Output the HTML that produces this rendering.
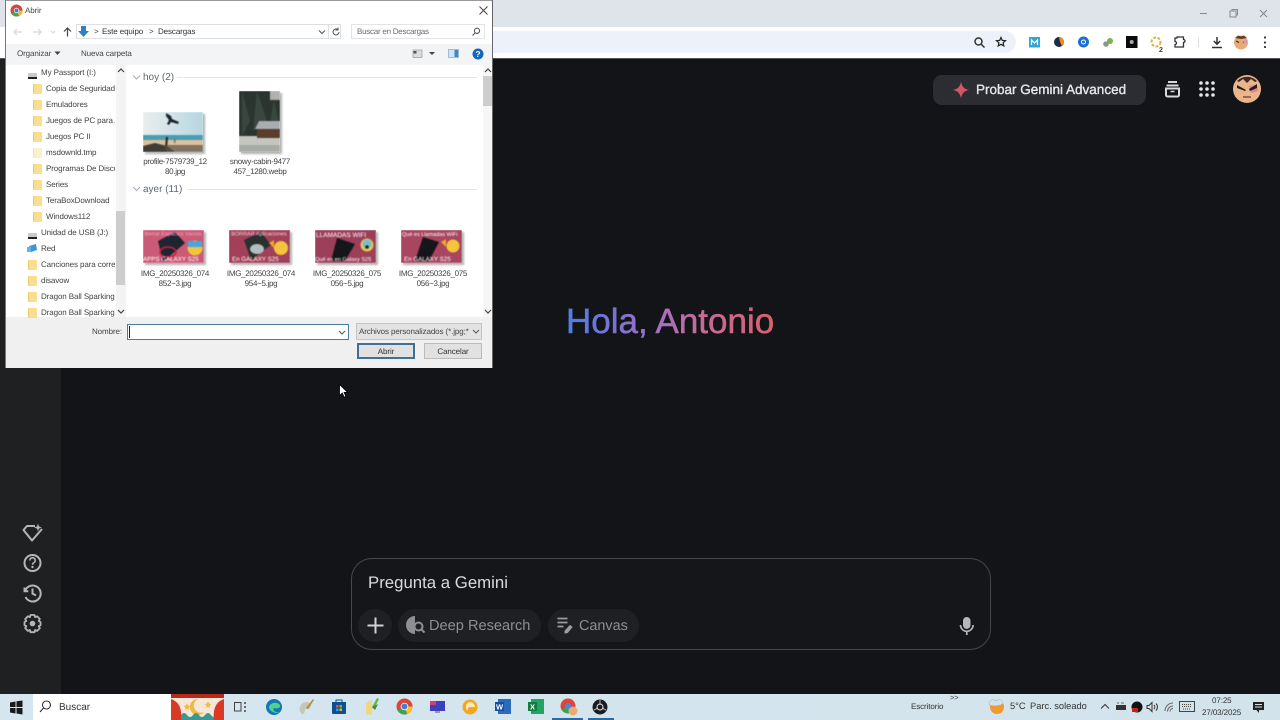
<!DOCTYPE html>
<html lang="es"><head><meta charset="utf-8"><title>Abrir</title>
<style>
html,body{margin:0;padding:0;width:1280px;height:720px;overflow:hidden;background:#131417;font-family:"Liberation Sans",sans-serif}
#w{position:absolute;left:0;top:0;width:1280px;height:720px;overflow:hidden;filter:blur(.3px);text-rendering:geometricPrecision}
.a{position:absolute}
.t{position:absolute;white-space:nowrap;font-size:8px;letter-spacing:-.1px;color:#444;line-height:11px}
.n{letter-spacing:0}
.f{position:absolute;width:8px;height:10px;background:#f8de8d;border-left:1px solid #e9cc70;border-radius:1px}
.cap{position:absolute;width:76px;text-align:center;font-size:8px;letter-spacing:-.3px;line-height:10px;color:#444;text-rendering:geometricPrecision}
.th{position:absolute;box-shadow:2px 2px 2px rgba(0,0,0,.3);overflow:hidden}
.th svg{filter:blur(.45px)}
svg{position:absolute;overflow:visible}
</style></head><body><div id="w">

<!-- Chrome behind -->
<div class="a" style="left:0;top:0;width:1280px;height:27px;background:#dfe3ea"></div>
<div class="a" style="left:0;top:27px;width:1280px;height:31px;background:#fff"></div>
<div class="a" style="left:480px;top:31px;width:536px;height:22px;background:#edf2fa;border-radius:0 11px 11px 0"></div>
<div class="a" style="left:0;top:58px;width:1280px;height:1px;background:#555"></div>
<svg style="left:0;top:0" width="1280" height="59" fill="none" stroke="#555">
<path d="M1200 13.500h7" stroke="#888"/><rect x="1230" y="11" width="6" height="6" stroke="#888"/><path d="M1232 11v-1.500h5.500v5.500h-1.500" stroke="#888"/>
<path d="M1260 10l7 7M1267 10l-7 7" stroke="#888"/>
<circle cx="978.500" cy="41.500" r="3.500" stroke="#333" stroke-width="1.500"/><path d="M981 44l3.500 3.500" stroke="#333" stroke-width="1.500"/>
<path d="M1001 37.500l1.300 2.900 3.200.3-2.400 2.100.7 3.100-2.800-1.600-2.800 1.600.7-3.100-2.400-2.100 3.200-.3z" stroke="#222" stroke-width="1.200"/>
<rect x="1029" y="37" width="11" height="10.500" fill="#34a4d8" stroke="none"/><path d="M1031.500 45v-5l3 3 3-3v5" stroke="#fff" stroke-width="1.200"/>
<circle cx="1059" cy="42" r="5" fill="#1b2a49" stroke="none"/><path d="M1059 37a5 5 0 0 1 3 9l-2-4z" fill="#ef8a1f" stroke="none"/>
<circle cx="1083.500" cy="42" r="5.500" fill="#1a6fd0" stroke="none"/><circle cx="1083.500" cy="42" r="2" stroke="#fff"/>
<circle cx="1106" cy="44" r="2.800" fill="#8a9a88" stroke="none"/><circle cx="1110" cy="41" r="3" fill="#7fae54" stroke="none"/>
<rect x="1126" y="36" width="11.500" height="12" fill="#0b0b0b" stroke="none"/><circle cx="1131.700" cy="42" r="2" fill="#aaa" stroke="none"/>
<circle cx="1156" cy="42" r="4.500" stroke="#e0b43c" stroke-width="2" stroke-dasharray="3 1.500"/>
<path d="M1177 37h6.500v2.500a1.500 1.500 0 0 1 0 3v4.500h-8.500v-2.500a1.500 1.500 0 0 0 0-3v-3.500h2z" stroke="#333" stroke-width="1.300"/>
<path d="M1198.500 38v9" stroke="#ddd"/>
<path d="M1217 37v7M1213.800 41l3.200 3.200 3.200-3.200M1212 47.500h10" stroke="#333" stroke-width="1.500"/>
<circle cx="1265" cy="37.500" r="1.100" fill="#333" stroke="none"/><circle cx="1265" cy="42.500" r="1.100" fill="#333" stroke="none"/><circle cx="1265" cy="47" r="1.100" fill="#333" stroke="none"/>
<circle cx="1241" cy="42.500" r="7" fill="#e8ab78" stroke="none"/><path d="M1235 38l3-2.500 3 1 3-1 3 2.500-6 1z" fill="#5e3c2a" stroke="none"/><path d="M1236 41l3 1.500M1246 41l-3 1.500" stroke="#3a2418"/><path d="M1243 40l4 0 0 3-3 1z" fill="#d99ab0" stroke="none"/>
</svg>
<div class="t" style="left:1159px;top:45px;font-size:7px;font-weight:bold;color:#333">2</div>

<!-- Gemini sidebar -->
<div class="a" style="left:0;top:59px;width:61px;height:635px;background:#1f2022"></div>
<svg style="left:0;top:510px" width="61" height="130" fill="none" stroke="#b4b6b8" stroke-width="2">
<path d="M35 16h-8l-3.500 4 8.500 10.500 10-11.500" stroke-linejoin="round"/><path d="M38 14.500l.8 2.200 2.200.8-2.200.8-.8 2.200-.8-2.200-2.200-.8 2.200-.8z" fill="#b4b6b8" stroke-width=".6"/>
<circle cx="32.500" cy="53" r="8"/><path d="M29.800 50.500a2.700 2.700 0 1 1 4 2.300c-.9.500-1.300 1-1.300 2" stroke-width="1.600"/><circle cx="32.500" cy="57" r=".6" stroke-width="1.200"/>
<path d="M25.300 80.500a8 8 0 1 1 .2 6.500M24.500 77.500v3.800h3.800M32.500 78.500v5l3.500 2"/>
<circle cx="32.500" cy="113.500" r="2.800" fill="#b4b6b8" stroke="none"/><path d="M30.500 105h4l.6 2.200 2-.9 2.700 2.700-1.100 2 1.800 1v3.200l-1.800 1 1.100 2-2.700 2.700-2-.9-.6 2.200h-4l-.6-2.200-2 .9-2.700-2.700 1.100-2-1.800-1V112l1.800-1-1.100-2 2.700-2.700 2 .9z" stroke-width="1.800" stroke-linejoin="round"/>
</svg>

<!-- Gemini header -->
<div class="a" style="left:933px;top:75px;width:213px;height:30px;background:#2c2d32;border-radius:9px"></div>
<svg style="left:952px;top:81px" width="18" height="18"><path d="M9 0.500C9.800 5.500 12 8 17 9 12 10 9.800 12.500 9 17.500 8.200 12.500 6 10 1 9 6 8 8.200 5.500 9 .5z" fill="#d2566a"/></svg>
<div class="t n" style="left:976px;top:82px;font-size:13.500px;line-height:16px;color:#e6e7e9;-webkit-text-stroke:.35px #e6e7e9">Probar Gemini Advanced</div>
<svg style="left:1160px;top:78px" width="30" height="24" fill="none" stroke="#d8d9da" stroke-width="2"><path d="M8 4h9M6.500 7.500h12"/><path d="M6 10.500h13v6.500a1.500 1.500 0 0 1-1.500 1.500h-10a1.500 1.500 0 0 1-1.500-1.500z"/><path d="M10.500 13.500h4" stroke-width="1.500"/></svg>
<svg style="left:1199px;top:81px" width="16" height="16" fill="#e4e5e6"><circle cx="2" cy="2" r="1.800"/><circle cx="8" cy="2" r="1.800"/><circle cx="14" cy="2" r="1.800"/><circle cx="2" cy="8" r="1.800"/><circle cx="8" cy="8" r="1.800"/><circle cx="14" cy="8" r="1.800"/><circle cx="2" cy="14" r="1.800"/><circle cx="8" cy="14" r="1.800"/><circle cx="14" cy="14" r="1.800"/></svg>
<svg style="left:1233px;top:75px" width="28" height="28"><circle cx="14" cy="14" r="14" fill="#e9b58a"/><path d="M4 6a14 14 0 0 1 20 0l-2 1-4-3-4 4-4-4-4 3z" fill="#3e2a22"/><path d="M16 11l8-1 1 6-7 2z" fill="#d884a4"/><path d="M4 10l9 5-1 1-8-3zM24 9l-8 5 1 2 7-3z" fill="#2e1c18"/><path d="M10 22h8" stroke="#8a4a3a" stroke-width="1.500"/></svg>

<!-- Greeting -->
<svg style="left:0;top:0" width="1280" height="720"><defs><linearGradient id="gr" gradientUnits="userSpaceOnUse" x1="566" y1="0" x2="775" y2="0"><stop offset="0" stop-color="#4f7fe6"/><stop offset=".18" stop-color="#6f74d8"/><stop offset=".42" stop-color="#a26fc4"/><stop offset=".65" stop-color="#c76a98"/><stop offset="1" stop-color="#d9606c"/></linearGradient></defs>
<text x="566" y="333" font-family="Liberation Sans" font-size="35" fill="url(#gr)" stroke="url(#gr)" stroke-width=".5">Hola, Antonio</text></svg>

<!-- Prompt box -->
<div class="a" style="left:351px;top:558px;width:638px;height:90px;border:1px solid #45474a;border-radius:21px;background:#151619"></div>
<div class="t n" style="left:368px;top:573px;font-size:16.800px;line-height:20px;color:#d9dadb">Pregunta a Gemini</div>
<div class="a" style="left:358px;top:609px;width:34px;height:33px;border-radius:50%;background:#1f2023"></div>
<svg style="left:366px;top:616px" width="20" height="20" stroke="#d0d1d2" stroke-width="2"><path d="M9.500 1.500v16M1.500 9.500h16"/></svg>
<div class="a" style="left:398px;top:609px;width:143px;height:33px;border-radius:17px;background:#1f2023"></div>
<svg style="left:406px;top:616px" width="22" height="20" fill="none" stroke="#8d8f91" stroke-width="2"><path d="M9 1a8 8 0 1 0 0 16" fill="#8d8f91"/><circle cx="12.500" cy="10.500" r="4" fill="#1f2023"/><path d="M15.500 13.500l3 3"/></svg>
<div class="t n" style="left:429px;top:617px;font-size:14.600px;line-height:18px;color:#8d8f91">Deep Research</div>
<div class="a" style="left:548px;top:609px;width:91px;height:33px;border-radius:17px;background:#1f2023"></div>
<svg style="left:556px;top:616px" width="20" height="20" fill="none" stroke="#9a9c9e" stroke-width="1.700"><path d="M1.500 2.500h10M1.500 6.500h10M1.500 10.500h6"/><path d="M9 15l5-5.500 2 1.500-4.500 5.500-2.500.5z" fill="#9a9c9e" stroke-width="1"/></svg>
<div class="t n" style="left:579px;top:617px;font-size:14.400px;line-height:18px;color:#8d8f91">Canvas</div>
<svg style="left:957px;top:615px" width="20" height="22" fill="none"><rect x="6" y="2" width="7.500" height="12" rx="3.700" fill="#b5b7b9"/><path d="M3.500 10a6.300 6.300 0 0 0 12.600 0M9.800 16.500v3.500" stroke="#b5b7b9" stroke-width="1.700"/></svg>

<!-- Dialog -->
<div class="a" style="left:5px;top:0;width:488px;height:368px;background:#fff;border-left:1px solid #777;border-right:1px solid #666;box-sizing:border-box"></div>
<div class="a" style="left:6px;top:0;width:486px;height:1px;background:#999"></div>
<div class="a" style="left:6px;top:44px;width:486px;height:21px;background:#f3f4f6"></div>
<div class="a" style="left:6px;top:317px;width:486px;height:51px;background:#f0f0f0"></div>

<svg style="left:10px;top:4px" width="13" height="13"><circle cx="6.500" cy="6.500" r="6" fill="#d9433a"/><path d="M6.500 6.500L1.300 9.500A6 6 0 0 0 9 12z" fill="#3aa757"/><path d="M6.500 6.500L9 12A6 6 0 0 0 12.500 6.500z" fill="#f2bc27"/><circle cx="6.500" cy="6.500" r="2.700" fill="#fff"/><circle cx="6.500" cy="6.500" r="2" fill="#3f7fdc"/></svg>
<div class="t" style="left:25px;top:5px">Abrir</div>
<svg style="left:478px;top:5px" width="11" height="11" stroke="#444" stroke-width="1"><path d="M1.500 1.500l8 8M9.500 1.500l-8 8"/></svg>

<!-- nav -->
<svg style="left:12px;top:26px" width="66" height="12" fill="none" stroke="#d8d8d8" stroke-width="1.200"><path d="M2 6h8M5 3L2 6l3 3M21 6h8M26 3l3 3-3 3"/><path d="M39 5l2 2 2-2" stroke-width="1"/><path d="M55.500 10.500V2.500M52 5.500l3.500-3.500 3.500 3.500" stroke="#444" stroke-width="1.200"/></svg>
<div class="a" style="left:76px;top:24px;width:265px;height:15px;border:1px solid #dcdfe3;box-sizing:border-box;background:#fff"></div>
<div class="a" style="left:328px;top:25px;width:1px;height:13px;background:#dcdfe3"></div>
<svg style="left:77px;top:25px" width="13" height="13"><path d="M4 1h5v5h3L6.500 12 1 6h3z" fill="#2f80c8"/></svg>
<div class="t" style="left:94px;top:26px;font-size:8px">&gt;</div>
<div class="t" style="left:102px;top:26px;color:#333">Este equipo</div>
<div class="t" style="left:149px;top:26px;font-size:8px">&gt;</div>
<div class="t" style="left:158px;top:26px;color:#333">Descargas</div>
<svg style="left:318px;top:29px" width="20" height="8" fill="none" stroke="#555"><path d="M1 1.500l3 3 3-3"/></svg>
<svg style="left:331px;top:27px" width="10" height="10" fill="none" stroke="#555" stroke-width="1"><path d="M8 5a3 3 0 1 1-1-2.300M7 .5v2.500h-2.500"/></svg>
<div class="a" style="left:351px;top:24px;width:134px;height:15px;border:1px solid #e2e4e7;box-sizing:border-box;background:#fff"></div>
<div class="t" style="left:357px;top:26px;color:#6b6b6b;letter-spacing:-.25px">Buscar en Descargas</div>
<svg style="left:471px;top:27px" width="10" height="10" fill="none" stroke="#555" stroke-width="1.100"><circle cx="6" cy="3.800" r="2.600"/><path d="M4 6L1.500 8.500"/></svg>

<!-- toolbar -->
<div class="t" style="left:17px;top:48px">Organizar</div>
<svg style="left:54px;top:51px" width="7" height="5"><path d="M.5 .5h6L3.500 4z" fill="#444"/></svg>
<div class="t" style="left:81px;top:48px">Nueva carpeta</div>
<svg style="left:412px;top:49px" width="30" height="10"><rect x="1" y="1" width="9" height="7.500" fill="#d9dde0" stroke="#8b9094" stroke-width=".6"/><rect x="1.500" y="2" width="3" height="2.500" fill="#555"/><path d="M17 3h6l-3 3z" fill="#444"/></svg>
<svg style="left:448px;top:49px" width="12" height="10"><rect x=".5" y=".5" width="10" height="8" fill="#cfe4f4" stroke="#8aa6ba" stroke-width=".7"/><rect x="6.500" y="1" width="3.500" height="7" fill="#3f88c5"/></svg>
<svg style="left:472px;top:48px" width="12" height="12"><circle cx="6" cy="6" r="5.500" fill="#1368bd"/><text x="6" y="9" font-size="8.500" font-weight="bold" fill="#fff" text-anchor="middle" font-family="Liberation Sans">?</text></svg>

<!-- Nav pane -->
<div class="a" style="left:116px;top:65px;width:10px;height:252px;background:#f4f4f4"></div>
<div class="a" style="left:116px;top:211px;width:9px;height:74px;background:#cdcdcd"></div>
<svg style="left:117px;top:68px" width="8" height="6" fill="none" stroke="#444" stroke-width="1.200"><path d="M1 4l3-3 3 3"/></svg>
<svg style="left:117px;top:309px" width="8" height="6" fill="none" stroke="#444" stroke-width="1.200"><path d="M1 1l3 3 3-3"/></svg>

<div class="a" style="left:28px;top:73px;width:9px;height:4px;background:#c8cbce;border-bottom:2px solid #222"></div>
<div class="t" style="left:41px;top:67px">My Passport (I:)</div>
<div class="f" style="left:33px;top:84px"></div><div class="t" style="left:46px;top:83px;width:69px;overflow:hidden">Copia de Seguridad</div>
<div class="f" style="left:33px;top:100px"></div><div class="t" style="left:46px;top:99px">Emuladores</div>
<div class="f" style="left:33px;top:116px"></div><div class="t" style="left:46px;top:115px;width:69px;overflow:hidden">Juegos de PC para A</div>
<div class="f" style="left:33px;top:132px"></div><div class="t" style="left:46px;top:131px">Juegos PC II</div>
<div class="f" style="left:33px;top:148px;background:#fbf0cc;border-left-color:#f0e2b0"></div><div class="t" style="left:46px;top:147px">msdownld.tmp</div>
<div class="f" style="left:33px;top:164px"></div><div class="t" style="left:46px;top:163px;width:69px;overflow:hidden">Programas De Disco</div>
<div class="f" style="left:33px;top:180px"></div><div class="t" style="left:46px;top:179px">Series</div>
<div class="f" style="left:33px;top:196px"></div><div class="t" style="left:46px;top:195px">TeraBoxDownload</div>
<div class="f" style="left:33px;top:212px"></div><div class="t" style="left:46px;top:211px">Windows112</div>
<div class="a" style="left:28px;top:233px;width:9px;height:4px;background:#c8cbce;border-bottom:2px solid #222"></div>
<div class="t" style="left:41px;top:227px">Unidad de USB (J:)</div>
<svg style="left:26px;top:243px" width="12" height="11"><path d="M3 3l7-2 1 6-6 2z" fill="#3b98d6"/><path d="M1 4h4v5H1z" fill="#62b3e6"/></svg>
<div class="t" style="left:41px;top:243px">Red</div>
<div class="f" style="left:28px;top:260px"></div><div class="t" style="left:41px;top:259px;width:74px;overflow:hidden">Canciones para corre</div>
<div class="f" style="left:28px;top:276px"></div><div class="t" style="left:41px;top:275px">disavow</div>
<div class="f" style="left:28px;top:292px"></div><div class="t" style="left:41px;top:291px">Dragon Ball Sparking</div>
<div class="f" style="left:28px;top:308px"></div><div class="t" style="left:41px;top:307px">Dragon Ball Sparking</div>

<!-- File pane -->
<svg style="left:133px;top:74px" width="345" height="120" fill="none" stroke="#9aa7b4" stroke-width=".9"><path d="M0 1.500l3.500 3.500 3.500-3.500M0 113l3.500 3.500 3.500-3.500"/><path d="M44 3.500h300M55 115.500h289" stroke="#e3e6ea"/></svg>
<div class="t n" style="left:143px;top:71px;font-size:10px;line-height:13px;color:#5c6670">hoy (2)</div>
<div class="t n" style="left:143px;top:183px;font-size:10px;line-height:13px;color:#5c6670">ayer (11)</div>

<div class="th" style="left:143px;top:112px;width:60px;height:40px">
<svg width="60" height="40"><defs><linearGradient id="sky" x1="0" x2="1"><stop offset="0" stop-color="#e9eeec"/><stop offset="1" stop-color="#b6d6e2"/></linearGradient></defs><rect width="60" height="24" fill="url(#sky)"/><rect y="23" width="60" height="6" fill="#4a9db6"/><path d="M0 28h60v12H0z" fill="#dcc09a"/><path d="M0 34l12-3 12 3 8 6H0z" fill="#3f3d38"/><path d="M23 25h2l-1 11h-2z" fill="#222"/><path d="M31 27h1.500v4H31zM20 33h40v7H24z" fill="#5a5148" opacity=".7"/><path d="M23 1l5 3 1 3 7 3-1 2-7-2-2 3-2-1 2-4-3-4z" fill="#1c2430"/></svg></div>
<div class="th" style="left:239px;top:91px;width:41px;height:61px">
<svg width="41" height="61"><rect width="41" height="61" fill="#2a3530"/><rect x="31" width="10" height="9" fill="#aeb3ae"/><path d="M3 0l8 30-8 15zM18 0l10 30-14 10zM35 8l5 25h-9z" fill="#3a4640"/><rect y="45" width="41" height="16" fill="#c4c5c0"/><rect y="54" width="41" height="7" fill="#a9aba6"/><path d="M18 38h23v9H18z" fill="#5a3d2c"/><path d="M16 38l4-8h21v8z" fill="#a8adb0"/></svg></div>
<div class="cap" style="left:137px;top:157px">profile-7579739_12<br>80.jpg</div>
<div class="cap" style="left:222px;top:157px">snowy-cabin-9477<br>457_1280.webp</div>

<div class="th" style="left:143px;top:230px;width:61px;height:33px">
<svg width="61" height="33"><rect width="61" height="33" fill="#cb5a76"/><path d="M15 11l17-9 10 11-22 19z" fill="#1e2430"/><ellipse cx="25" cy="22" rx="8" ry="5" fill="none" stroke="#c8213a" stroke-width="1.500"/><circle cx="52" cy="18" r="7.500" fill="#f3c53c"/><path d="M45 11h14v6H45z" fill="#47a7df"/><text x="30" y="5.500" font-size="5.500" fill="#eac" text-anchor="middle" font-family="Liberation Sans">Borrar Espacios Vacíos</text><text x="0" y="31" font-size="6.200" fill="#fff" font-family="Liberation Sans">APPS GALAXY S25</text></svg></div>
<div class="th" style="left:229px;top:230px;width:61px;height:33px">
<svg width="61" height="33"><rect width="61" height="33" fill="#a24059"/><path d="M15 10l17-8 10 13-20 15z" fill="#28312f"/><ellipse cx="28" cy="19" rx="7" ry="5" fill="#b5bcc4"/><circle cx="52" cy="18" r="7" fill="#f3c53c"/><path d="M40 13l5-3v8z" fill="#f5a623"/><text x="30" y="5.500" font-size="5.500" fill="#f0d0d8" text-anchor="middle" font-family="Liberation Sans">BORRAR Aplicaciones</text><text x="3" y="31" font-size="6.200" fill="#fff" font-family="Liberation Sans">En GALAXY S25</text></svg></div>
<div class="th" style="left:315px;top:230px;width:61px;height:33px">
<svg width="61" height="33"><rect width="61" height="33" fill="#9c3f5a"/><path d="M22 8l18 6-10 17H16z" fill="#15161a"/><circle cx="52" cy="15" r="6.500" fill="#e9c64a"/><circle cx="52" cy="14" r="4.500" fill="#6ec1d8"/><circle cx="52" cy="17" r="1.800" fill="#222"/><text x="1" y="7" font-size="6.500" fill="#fff" font-family="Liberation Sans">LLAMADAS WIFI</text><text x="0" y="31" font-size="5.600" fill="#fff" font-family="Liberation Sans">Qué es en Galaxy S25</text></svg></div>
<div class="th" style="left:401px;top:230px;width:61px;height:33px">
<svg width="61" height="33"><rect width="61" height="33" fill="#a84560"/><path d="M22 7l16 5-10 19H14z" fill="#15161a"/><circle cx="52" cy="16" r="6.500" fill="#f3c53c"/><path d="M40 12l5-3v8z" fill="#f5a623"/><text x="1" y="6" font-size="5.500" fill="#fff" font-family="Liberation Sans">Qué es Llamadas WiFi</text><text x="3" y="31" font-size="6.200" fill="#fff" font-family="Liberation Sans">En GALAXY S25</text></svg></div>
<div class="cap" style="left:137px;top:269px">IMG_20250326_074<br>852~3.jpg</div>
<div class="cap" style="left:223px;top:269px">IMG_20250326_074<br>954~5.jpg</div>
<div class="cap" style="left:309px;top:269px">IMG_20250326_075<br>056~5.jpg</div>
<div class="cap" style="left:395px;top:269px">IMG_20250326_075<br>056~3.jpg</div>

<!-- File pane scrollbar -->
<div class="a" style="left:483px;top:65px;width:9px;height:252px;background:#f6f6f6"></div>
<div class="a" style="left:483px;top:76px;width:9px;height:30px;background:#cdcdcd"></div>
<svg style="left:484px;top:68px" width="8" height="6" fill="none" stroke="#444" stroke-width="1.200"><path d="M1 4l3-3 3 3"/></svg>
<svg style="left:484px;top:309px" width="8" height="6" fill="none" stroke="#444" stroke-width="1.200"><path d="M1 1l3 3 3-3"/></svg>

<!-- Bottom of dialog -->
<div class="t" style="left:92px;top:326px">Nombre:</div>
<div class="a" style="left:127px;top:324px;width:222px;height:16px;background:#fff;border:1px solid #4b7c99;box-sizing:border-box"></div>
<div class="a" style="left:129px;top:326px;width:1px;height:12px;background:#222"></div>
<svg style="left:338px;top:330px" width="9" height="6" fill="none" stroke="#555"><path d="M1 1l3 3 3-3"/></svg>
<div class="a" style="left:356px;top:323px;width:126px;height:17px;background:#e3e3e3;border:1px solid #c4c4c4;box-sizing:border-box"></div>
<div class="t" style="left:359px;top:326px;width:110px;overflow:hidden">Archivos personalizados (*.jpg;*</div>
<svg style="left:472px;top:329px" width="9" height="6" fill="none" stroke="#555"><path d="M1 1l3 3 3-3"/></svg>
<div class="a" style="left:357px;top:343px;width:58px;height:16px;background:#e1e1e1;border:2px solid #3d7195;box-sizing:border-box"></div>
<div class="t" style="left:357px;top:346px;width:58px;text-align:center;color:#333">Abrir</div>
<div class="a" style="left:424px;top:343px;width:58px;height:16px;background:#e1e1e1;border:1px solid #bbb;box-sizing:border-box"></div>
<div class="t" style="left:424px;top:346px;width:58px;text-align:center;color:#333">Cancelar</div>

<!-- Cursor -->
<svg style="left:339px;top:384px" width="10" height="15"><path d="M.5 .5v11l2.800-2.500 1.800 4.200 1.800-.8-1.800-4h3.600z" fill="#fff" stroke="#000" stroke-width=".8"/></svg>

<!-- Taskbar -->
<div class="a" style="left:0;top:694px;width:1280px;height:26px;background:linear-gradient(90deg,#d6e6f0,#d3e3ec)"></div>
<svg style="left:10px;top:701px" width="13" height="13" fill="#1a1a1a"><path d="M0 1.500l5.500-1v5.500H0zM6.500 .3L12.500-.5V6H6.500zM0 7h5.500v5.500L0 11.500zM6.500 7h6v6.500l-6-1z"/></svg>
<div class="a" style="left:33px;top:694px;width:138px;height:26px;background:#fff"></div>
<svg style="left:39px;top:700px" width="13" height="14" fill="none" stroke="#333" stroke-width="1.100"><circle cx="7.500" cy="5" r="4"/><path d="M4.500 8L1 12"/></svg>
<div class="t n" style="left:59px;top:702px;font-size:10px;line-height:12px;color:#333">Buscar</div>
<svg style="left:171px;top:694px" width="53" height="26"><rect width="53" height="26" fill="#f6e7d8"/><path d="M0 0h53v26H43C42 16 44 8 53 5V3H0v2c9 3 11 11 10 21H0z" fill="#d83a26"/><path d="M0 0h53v4H0z" fill="#b82a1a"/><path d="M27 5a8 8 0 1 0 6 13 7 7 0 1 1-6-13z" fill="#f1b940"/><path d="M10 21q3-4 6 0t6 0 6 0 6 0 6 0 3 0v5H10z" fill="#3a9a92"/><path d="M16 9l1 2.500 2.500.5-2 1.500.5 2.500-2-1.300-2 1.300.5-2.500-2-1.500 2.500-.5zM37 7l1 2.500 2.500.5-2 1.500.5 2.500-2-1.300-2 1.300.5-2.500-2-1.500 2.500-.5z" fill="#f1b940"/></svg>
<svg style="left:234px;top:701px" width="13" height="12" fill="none" stroke="#444"><rect x=".5" y="1.500" width="6.500" height="8.500"/><path d="M10 2h2M10 6h2M10 10h2" stroke-width="1.500"/></svg>
<svg style="left:265px;top:698px" width="18" height="18"><circle cx="9" cy="9" r="8" fill="#1376b5"/><path d="M4 10a6 5 0 0 1 11-3c1 3-3 4-6 3-2 2 1 5 6 4a8 8 0 0 1-11-4z" fill="#53d08a"/></svg>
<svg style="left:298px;top:698px" width="17" height="17"><path d="M2 13c-2-5 3-10 8-9 3 1 4 4 2 6s-4 0-5 2 0 4-2 4-2-1-3-3z" fill="#c9c6b8"/><path d="M15 1l1 1-6 9-2-1z" fill="#b38a44"/></svg>
<svg style="left:331px;top:698px" width="16" height="17"><path d="M1 4h14v11a1 1 0 0 1-1 1H2a1 1 0 0 1-1-1z" fill="#0e4f8f"/><path d="M5 4V2h6v2" stroke="#0e4f8f" fill="none"/><rect x="5" y="7" width="2.500" height="2.500" fill="#e8542d"/><rect x="8.500" y="7" width="2.500" height="2.500" fill="#7cbb3c"/><rect x="5" y="10.500" width="2.500" height="2.500" fill="#31a0e0"/><rect x="8.500" y="10.500" width="2.500" height="2.500" fill="#f4b71d"/></svg>
<svg style="left:365px;top:697px" width="15" height="19"><path d="M1 6l6-3v15l-6-1z" fill="#f0d77c"/><path d="M7 10l5-9 2 1-5 10z" fill="#67b645"/><path d="M7 10l6-3-3 6z" fill="#3f8f2a"/></svg>
<svg style="left:396px;top:698px" width="17" height="17"><circle cx="8.500" cy="8.500" r="8" fill="#de4437"/><path d="M8.500 8.500L1.500 12.500A8 8 0 0 0 11 16z" fill="#35a752"/><path d="M8.500 8.500L11 16A8 8 0 0 0 16.500 8.500z" fill="#f5c026"/><circle cx="8.500" cy="8.500" r="3.800" fill="#fff"/><circle cx="8.500" cy="8.500" r="3" fill="#3d7fdb"/></svg>
<svg style="left:430px;top:701px" width="15" height="13"><rect width="15" height="10" fill="#3f3fb8"/><rect x="0" y="0" width="6" height="4" fill="#d23f7a"/><rect x="5" y="10" width="5" height="2" fill="#999"/></svg>
<svg style="left:462px;top:699px" width="16" height="16"><circle cx="8" cy="8" r="7.500" fill="#f2a81e"/><path d="M8 3a5 5 0 0 1 5 5H8a2.500 2.500 0 0 0-2 4 5 5 0 0 1 2-9z" fill="#fbe9bd"/></svg>
<svg style="left:495px;top:699px" width="16" height="15"><rect x="3" y="0" width="13" height="15" fill="#2a6bbd"/><rect x="0" y="3" width="9" height="9" fill="#154f9e"/><text x="4.500" y="10.500" font-size="7.500" font-weight="bold" fill="#fff" text-anchor="middle" font-family="Liberation Sans">W</text></svg>
<svg style="left:528px;top:699px" width="16" height="15"><rect x="3" y="0" width="13" height="15" fill="#21a366"/><rect x="0" y="3" width="9" height="9" fill="#107c41"/><text x="4.500" y="10.500" font-size="7.500" font-weight="bold" fill="#fff" text-anchor="middle" font-family="Liberation Sans">X</text></svg>
<svg style="left:560px;top:698px" width="18" height="18"><circle cx="8" cy="8" r="7.500" fill="#de4437"/><path d="M8 8L1.500 11.500A7.500 7.500 0 0 0 10 15z" fill="#35a752"/><circle cx="8" cy="8" r="3" fill="#4a86dc"/><circle cx="13" cy="13" r="4.500" fill="#e8ab78"/></svg>
<div class="a" style="left:552px;top:718px;width:31px;height:2px;background:#2a6aa8"></div>
<svg style="left:592px;top:699px" width="16" height="16"><circle cx="8" cy="8" r="7.500" fill="#1c1c20"/><circle cx="8" cy="8" r="3" fill="none" stroke="#ddd"/><path d="M8 1v5M2 11l4-2M14 11l-4-2" stroke="#ddd" stroke-width=".8"/></svg>
<div class="a" style="left:588px;top:718px;width:26px;height:2px;background:#2a6aa8"></div>

<div class="t" style="left:911px;top:701px;line-height:12px;color:#333">Escritorio</div>
<div class="t" style="left:950px;top:692px;font-size:7.500px">&gt;&gt;</div>
<svg style="left:988px;top:697px" width="18" height="18"><circle cx="9" cy="10" r="7" fill="#ef9a2f"/><path d="M1 7a4 4 0 0 1 7-3 4 4 0 0 1 7 2c-1 3-12 4-14 1z" fill="#cfe2ee" stroke="#9db9cc" stroke-width=".5"/></svg>
<div class="t n" style="left:1010px;top:700px;font-size:9.300px;line-height:13px;color:#333">5°C</div>
<div class="t n" style="left:1030px;top:700px;font-size:9.300px;line-height:13px;color:#333">Parc. soleado</div>
<svg style="left:1100px;top:703px" width="10" height="7" fill="none" stroke="#333"><path d="M1 5.500l4-4 4 4"/></svg>
<svg style="left:1115px;top:702px" width="12" height="10"><rect x="1" y="3" width="10" height="5" fill="#333"/><path d="M2 1h2M6 1h3" stroke="#666"/></svg>
<svg style="left:1131px;top:701px" width="12" height="12"><circle cx="6" cy="6" r="5.500" fill="#111"/><rect x="1" y="7" width="6" height="4" fill="#c81d1d"/></svg>
<svg style="left:1146px;top:701px" width="13" height="12" fill="none" stroke="#333"><path d="M1 4.500h2l3-3v9l-3-3H1z"/><path d="M8 4a3 3 0 0 1 0 4M10 2.500a5 5 0 0 1 0 7"/></svg>
<svg style="left:1164px;top:702px" width="11" height="11" fill="none" stroke="#666"><path d="M1 9a8 8 0 0 1 8-8M3.500 9.500a5.500 5.500 0 0 1 5.500-5.500M6 9.500a3 3 0 0 1 3-3"/></svg>
<svg style="left:1179px;top:701px" width="16" height="12" fill="none" stroke="#444"><rect x=".5" y=".5" width="15" height="10"/><path d="M3 3.500h10M3 5.500h10M4 8h8" stroke-dasharray="1 1"/></svg>
<div class="t" style="left:1212px;top:695px;color:#333">07:25</div>
<div class="t" style="left:1202px;top:707px;color:#333">27/03/2025</div>
<svg style="left:1252px;top:701px" width="13" height="13"><path d="M1 1h11v8H7v3L4.500 9H1z" fill="#222"/><path d="M3 3.500h7M3 6h7" stroke="#d5e4ec"/></svg>
</div></body></html>
